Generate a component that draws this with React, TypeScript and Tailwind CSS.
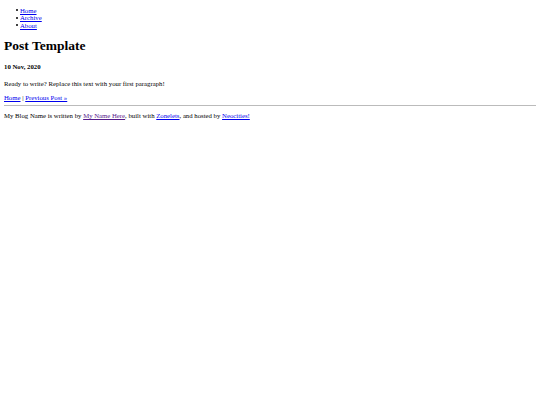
function Item({ label }: { label: string }) {
  return (
    <li className="flex items-center gap-[2.5px]">
      <span className="h-[2px] w-[2px] shrink-0 rounded-full bg-black" />
      <a href="#" className="text-[#0000ee] underline decoration-[0.5px]">{label}</a>
    </li>
  );
}

export default function App() {
  return (
    <div className="min-h-[405px] bg-white px-[4px] pt-[6.5px] font-['Liberation_Serif',serif] text-[6.75px] leading-[7.5px] text-black">
      <ul className="pl-[11.5px]">
        <Item label="Home" />
        <Item label="Archive" />
        <Item label="About" />
      </ul>
      <h1 className="mt-[8.7px] text-[13.5px] leading-[15px] font-bold">Post Template</h1>
      <h4 className="mt-[10.2px] font-bold">10 Nov, 2020</h4>
      <p className="mt-[10.1px]">Ready to write? Replace this text with your first paragraph!</p>
      <p className="mt-[6px]">
        <a href="#" className="text-[#0000ee] underline decoration-[0.5px]">Home</a> |{" "}
        <a href="#" className="text-[#0000ee] underline decoration-[0.5px]">Previous Post »</a>
      </p>
      <hr className="mt-[4px] border-t border-[#bbbbbb]" />
      <p className="mt-[6px]">
        My Blog Name is written by{" "}
        <a href="#" className="text-[#551a8b] underline decoration-[0.5px]">My Name Here</a>, built with{" "}
        <a href="#" className="text-[#0000ee] underline decoration-[0.5px]">Zonelets</a>, and hosted by{" "}
        <a href="#" className="text-[#0000ee] underline decoration-[0.5px]">Neocities!</a>
      </p>
    </div>
  );
}
